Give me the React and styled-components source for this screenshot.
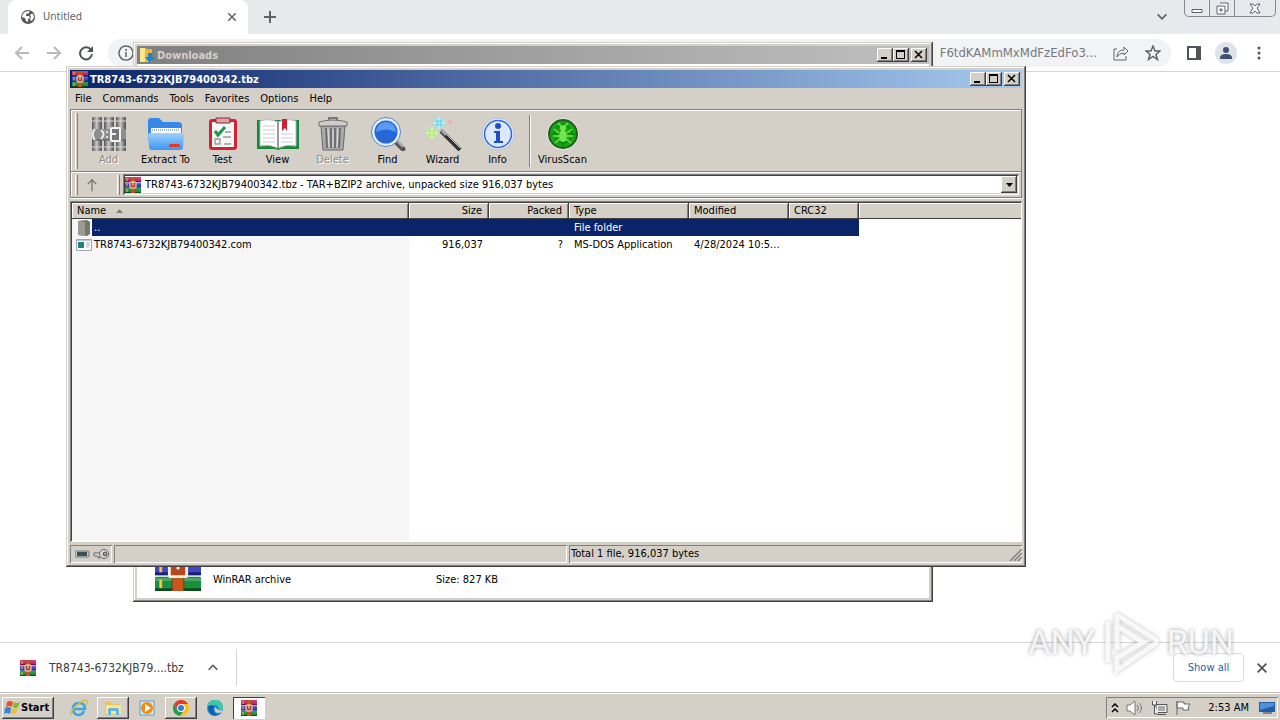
import React from "react";
import styled, { createGlobalStyle, css } from "styled-components";

const ui = `"DejaVu Sans Condensed", "DejaVu Sans", sans-serif`;

const Global = createGlobalStyle`
  *, *::before, *::after { box-sizing: border-box; }
  html, body { margin: 0; padding: 0; }
  body { font-family: ${ui}; font-size: 11px; line-height: 14px; color: #000; background: #fff; }
  button, input, select { font: inherit; color: inherit; margin: 0; padding: 0; border: 0; background: none; }
  svg { display: block; flex: none; }
`;

const raised = css`
  box-shadow: inset -1px -1px #404040, inset 1px 1px #fff, inset -2px -2px #808080;
`;
const sunken = css`
  box-shadow: inset 1px 1px #808080, inset -1px -1px #fff;
`;

const Desktop = styled.div`
  position: relative;
  display: flex;
  flex-direction: column;
  min-height: 100vh;
  overflow: hidden;
`;

/* ---------- browser ---------- */
const TabStrip = styled.header`
  display: flex;
  align-items: stretch;
  height: 34px;
  padding-left: 8px;
  background: #e7eaed;
`;
const Tab = styled.div`
  display: flex;
  align-items: center;
  gap: 8px;
  width: 240px;
  padding: 0 10px 0 13px;
  border-radius: 8px 8px 0 0;
  background: #fff;
  color: #5f6368;
`;
const Grow = styled.span`
  flex: 1;
`;
const PlainButton = styled.button`
  display: grid;
  place-items: center;
  width: ${(p) => p.$w || 16}px;
  height: ${(p) => p.$h || 16}px;
`;
const NewTab = styled(PlainButton)`
  align-self: center;
  margin-left: 12px;
`;
const TabSearch = styled(PlainButton)`
  align-self: center;
  margin-right: 14px;
`;
const Caption = styled.div`
  display: flex;
  height: 17px;
  margin-right: 4px;
  border: 1px solid #85898f;
  border-top: 0;
  border-radius: 0 0 5px 5px;
  button + button { border-left: 1px solid #85898f; }
`;
const NavBar = styled.div`
  display: flex;
  align-items: center;
  gap: 16px;
  height: 38px;
  padding: 0 13px 0 14px;
  border-bottom: 1px solid #d5d7da;
  background: #fff;
`;
const NavActions = styled.div`
  display: flex;
  align-items: center;
  gap: 14px;
`;
const Omnibox = styled.label`
  flex: 1;
  display: flex;
  align-items: center;
  gap: 16px;
  height: 28px;
  margin-left: -2px;
  padding: 0 10px;
  border-radius: 14px;
  background: #f1f3f4;
`;
const Url = styled.input`
  flex: 1;
  min-width: 0;
  font-size: 13px;
  text-align: right;
  color: #75797e;
  outline: 0;
`;
const Avatar = styled.span`
  display: grid;
  place-items: center;
  width: 22px;
  height: 22px;
  border-radius: 50%;
  background: #dfe2e7;
`;
const Page = styled.main`
  flex: 1;
  min-height: 570px;
`;
const Shelf = styled.section`
  display: flex;
  align-items: center;
  height: 50px;
  border-top: 1px solid #d5d7da;
  background: #fff;
`;
const Download = styled.div`
  display: flex;
  align-items: center;
  gap: 13px;
  width: 237px;
  height: 37px;
  padding: 0 15px 0 20px;
  border-right: 1px solid #d5d7da;
  font-size: 12px;
  color: #3c4043;
  white-space: nowrap;
  span { flex: 1; }
`;
const ShowAll = styled.button`
  width: 71px;
  height: 29px;
  margin-right: 10px;
  border: 1px solid #d9dbde;
  border-radius: 4px;
  color: #1a5fc0;
`;
const ShelfClose = styled(PlainButton)`
  margin-right: 10px;
`;

/* ---------- classic windows ---------- */
const Window = styled.section`
  position: absolute;
  top: ${(p) => p.$top}px;
  left: ${(p) => p.$left}px;
  width: ${(p) => p.$width};
  padding: 4px;
  background: #d4d0c8;
  box-shadow: inset -1px -1px #404040, inset 1px 1px #d4d0c8, inset -2px -2px #808080, inset 2px 2px #fff;
`;
const TitleBar = styled.div`
  display: flex;
  align-items: center;
  gap: 2px;
  height: 18px;
  padding: 0 2px;
  font-weight: bold;
  color: ${(p) => (p.$active ? "#fff" : "#d4d0c8")};
  background: ${(p) => (p.$active
    ? "linear-gradient(90deg, #0a246a, #a6caf0)"
    : "linear-gradient(90deg, #808080, #c0c0c0)")};
`;
const TitleText = styled.span`
  flex: 1;
  padding-top: 1px;
`;
const ButtonPair = styled.div`
  display: flex;
`;
const TitleButton = styled.button`
  display: grid;
  place-items: center;
  width: 16px;
  height: 14px;
  background: #d4d0c8;
  ${raised}
`;
const FolderBody = styled.div`
  display: flex;
  align-items: flex-end;
  min-height: 534px;
  padding: 0 18px 7px;
  background: #fff;
`;
const Thumb = styled.span`
  width: 58px;
`;
const Detail = styled.span`
  width: ${(p) => p.$w}px;
  padding-bottom: 4px;
`;
const MenuBar = styled.nav`
  display: flex;
  gap: 11px;
  height: 20px;
  padding: 2px 5px 0;
  align-items: center;
`;
const MenuItem = styled.button`
  height: 18px;
`;
const Rebar = styled.div`
  margin: 1px 0 3px;
  border: 1px solid #808080;
  box-shadow: inset 1px 1px #fff, 0 1px #fff;
`;
const ToolRow = styled.div`
  display: flex;
  align-items: center;
  height: 62px;
  padding: 0 4px;
  border-bottom: 1px solid #808080;
`;
const Grip = styled.span`
  flex: none;
  width: 3px;
  align-self: stretch;
  margin: 3px ${(p) => p.$gap || 0}px 2px 0;
  border-left: 1px solid #fff;
  border-right: 1px solid #808080;
`;
const Tool = styled.button`
  display: flex;
  flex-direction: column;
  align-items: center;
  gap: 2px;
  width: ${(p) => p.$w || 55}px;
  padding-top: 3px;
  color: #000;
  white-space: nowrap;
  &:disabled { color: #8c8a84; text-shadow: 1px 1px #fff; }
`;
const ToolSep = styled.span`
  width: 2px;
  height: 52px;
  margin: 0 4px;
  border-left: 1px solid #808080;
  border-right: 1px solid #fff;
`;
const AddressRow = styled.div`
  display: flex;
  align-items: center;
  height: 25px;
  padding: 0 2px 0 4px;
  box-shadow: inset 0 1px #fff;
`;
const UpButton = styled(PlainButton)`
  margin-right: 17px;
`;
const Address = styled.label`
  flex: 1;
  display: flex;
  align-items: center;
  gap: 4px;
  height: 21px;
  padding: 0 2px;
  background: #fff;
  box-shadow: inset 1px 1px #808080, inset -1px -1px #fff, inset 2px 2px #404040, inset -2px -2px #d4d0c8;
  select { flex: 1; appearance: none; outline: 0; }
`;
const DropMark = styled.span`
  display: grid;
  place-items: center;
  width: 16px;
  height: 17px;
  background: #d4d0c8;
  ${raised}
`;
const List = styled.div`
  min-height: 341px;
  padding: 2px 1px 1px 2px;
  background: linear-gradient(90deg, #f6f6f6 339px, #fff 339px);
  box-shadow: inset 1px 1px #808080, inset -1px -1px #fff, inset 2px 2px #404040;
`;
const Files = styled.table`
  width: 100%;
  table-layout: fixed;
  border-collapse: separate;
  border-spacing: 0;
  th, td { padding: 0 6px 0 5px; font-weight: normal; text-align: left; white-space: nowrap; overflow: hidden; }
  th { height: 16px; line-height: 15px; background: #d4d0c8; border-bottom: 1px solid #404040; border-right: 1px solid #404040; box-shadow: inset 1px 1px #fff, inset -1px 0 #808080; }
  th:last-child { border-right: 0; box-shadow: inset 1px 1px #fff; }
  td { height: 17px; line-height: 17px; }
  th.num, td.num { text-align: right; }
`;
const FileRow = styled.tr`
  color: ${(p) => (p.$selected ? "#fff" : "#000")};
  td { background: ${(p) => (p.$selected ? "#0a246a" : "transparent")}; }
  td:first-child { padding: 0 0 0 4px; background: transparent; }
  td:last-child { background: transparent; }
`;
const NameCell = styled.div`
  display: flex;
  align-items: center;
  height: 17px;
  span { flex: 1; padding-left: 2px; background: ${(p) => (p.$selected ? "#0a246a" : "transparent")}; }
`;
const HeadName = styled.span`
  display: flex;
  align-items: center;
  gap: 10px;
`;
const StatusBar = styled.footer`
  display: flex;
  gap: 2px;
  margin-top: 3px;
`;
const Panel = styled.div`
  display: flex;
  align-items: center;
  justify-content: space-between;
  flex: ${(p) => p.$flex};
  height: 18px;
  padding-left: ${(p) => p.$pad || 2}px;
  ${sunken}
`;

/* ---------- taskbar ---------- */
const Taskbar = styled.footer`
  display: flex;
  align-items: center;
  gap: 2px;
  height: 28px;
  padding: 2px 2px 0;
  border-top: 1px solid #c2c0bb;
  background: #d4d0c8;
  box-shadow: inset 0 1px #fff;
`;
const Start = styled.button`
  display: flex;
  align-items: center;
  gap: 1px;
  width: 52px;
  height: 22px;
  margin-right: 7px;
  padding-left: 2px;
  font-weight: bold;
  ${raised}
`;
const TaskButton = styled.button`
  display: grid;
  place-items: center;
  width: 32px;
  height: 22px;
  ${(p) => p.$state === "open" && raised}
  ${(p) => p.$state === "pressed" && css`background: #fff; box-shadow: inset 1px 1px #404040, inset -1px -1px #fff;`}
`;
const Tray = styled.div`
  display: flex;
  align-items: center;
  gap: 7px;
  height: 21px;
  padding: 0 3px 0 5px;
  ${sunken}
  time { padding: 0 3px 0 9px; }
`;
const Watermark = styled.div`
  position: absolute;
  right: 46px;
  bottom: 46px;
  display: flex;
  align-items: center;
  gap: 4px;
  font: 34px/36px Roboto, "Liberation Sans", sans-serif;
  color: rgba(255, 255, 255, 0.85);
  text-shadow: 0 0 4px rgba(0, 0, 0, 0.4);
  pointer-events: none;
  svg { filter: drop-shadow(0 0 2px rgba(0, 0, 0, 0.3)); }
`;

/* ---------- drawings ---------- */
const Stroke = ({ d, size = 16, color = "#5f6368", w = 2 }) => (
  <svg width={size} height={size} viewBox="0 0 16 16" fill="none" stroke={color} strokeWidth={w}><path d={d} /></svg>
);
const books = [
  { fill: "#c32b62", edge: "#7c123c" },
  { fill: "#4146c8", edge: "#1c1f78" },
  { fill: "#1b8f3c", edge: "#0b4c1c" },
];
const Rar = ({ size = 16 }) => (
  <svg width={size} height={size} viewBox="0 0 32 32">
    {books.map((b, i) => (
      <g key={b.fill} transform={`translate(0 ${i * 11})`}>
        <rect width="32" height="10" rx="1" fill={b.fill} />
        <path d="M0 2h32" stroke="#fff" strokeOpacity=".2" strokeWidth="2" />
        <path d="M0 9h32" stroke={b.edge} strokeWidth="2" />
        <path d="M4 2v6" stroke="#f6c53c" strokeWidth="2" />
      </g>
    ))}
    <rect x="12" y="0" width="8" height="32" fill="#c9561c" />
    <path d="M12 0v32M20 0v32" stroke="#6b2b12" strokeOpacity=".5" />
    <rect x="10" y="10" width="12" height="12" rx="1" fill="#b8481c" stroke="#f1efe8" strokeWidth="2" />
    <path d="M16 10v7" stroke="#f1efe8" strokeWidth="2" />
  </svg>
);
const AddIcon = () => (
  <svg width="34" height="34" viewBox="0 0 34 34">
    <defs><linearGradient id="book"><stop stopColor="#555" /><stop offset=".45" stopColor="#c4c4c4" /><stop offset="1" stopColor="#4b4b4b" /></linearGradient></defs>
    {[0, 12, 24].map((x) => <g key={x}><rect x={x} width="10" height="34" rx="1" fill="url(#book)" /><path d={`M${x} 4h10M${x} 30h10`} stroke="#e4e4e4" strokeOpacity=".6" strokeWidth="1.5" /></g>)}
    <path d="M0 12h34v11H0z" fill="#8d8d8d" /><path d="M0 23h34" stroke="#555" />
    <path d="M3 12a8 8 0 0 0 0 11M9 13q5 4 0 9" fill="none" stroke="#e9e9e9" strokeWidth="2" />
    <circle cx="15" cy="15" r="1" fill="#fff" /><circle cx="15" cy="20" r="1" fill="#fff" />
    <rect x="19" y="11" width="9" height="13" rx="1" fill="#777" stroke="#f3f3f3" strokeWidth="2" /><path d="M18 17h6" stroke="#f3f3f3" strokeWidth="2" />
  </svg>
);
const ExtractIcon = () => (
  <svg width="38" height="34" viewBox="0 0 38 34">
    <defs><linearGradient id="fold" x2="0" y2="1"><stop stopColor="#9fd2ff" /><stop offset="1" stopColor="#3b96f2" /></linearGradient></defs>
    <path d="M1 4q0-3 3-3h8l4 4h15q4 0 4 4v14H1z" fill="#3388ea" />
    <path d="M4 11h30v9H4z" fill="#fff" /><path d="M5 13h28" stroke="#9bbbd9" strokeWidth="2" strokeDasharray="1 1" />
    <path d="M1 18q0-2 2-2h32q2 0 2 2l-1 12q0 3-3 3H5q-3 0-3-3z" fill="url(#fold)" />
    <rect x="22" y="27" width="11" height="3" rx="1" fill="#e5392c" />
  </svg>
);
const TestIcon = () => (
  <svg width="34" height="34" viewBox="0 0 34 34">
    <rect x="3" y="2" width="28" height="31" rx="3" fill="#d42235" />
    <path d="M6 5h22v25H6z" fill="#f6f6f6" /><path d="M10 1h14v5H10z" fill="#dba4a6" stroke="#8f2830" />
    <path d="m9 14 3 4 7-8" fill="none" stroke="#249548" strokeWidth="3" />
    <path d="M19 15h6M17 20h8M18 27h7M9 22h5v5H9z" fill="none" stroke="#999" strokeWidth="1.3" />
  </svg>
);
const ViewIcon = () => (
  <svg width="42" height="34" viewBox="0 0 42 34">
    <path d="M0 3h42v29H24l-3 1-3-1H0z" fill="#15883e" />
    <path d="M3 4q9-3 18 1 9-4 18-1v25q-10-2-18 2-8-4-18-2z" fill="#fff" stroke="#bbb" />
    <path d="M21 5v26" stroke="#999" strokeWidth="2" />
    <path d="M6 9h12M6 13h12M6 17h12M6 21h12M6 25h12M24 17h12M24 21h12M24 25h12" stroke="#ccc" />
    <path d="M25 2h5v12l-2-3-3 3z" fill="#d51d36" />
  </svg>
);
const DeleteIcon = () => (
  <svg width="34" height="34" viewBox="0 0 34 34">
    <path d="M5 9h24l-2 24H7z" fill="#aaa" stroke="#686868" />
    <path d="m10 11 1 20M15 11v20M19 11v20M24 11l-1 20" stroke="#6f6f6f" strokeWidth="2" />
    <path d="m12 12 1 18M17 12v18M22 12l-1 18" stroke="#e5e5e5" />
    <path d="M3 5q14-4 28 0v4H3z" fill="#ccc" stroke="#707070" /><path d="M13 3V1h8v2" fill="none" stroke="#777" strokeWidth="2" />
  </svg>
);
const FindIcon = () => (
  <svg width="36" height="34" viewBox="0 0 36 34">
    <path d="m24 23 9 9" stroke="#555" strokeWidth="5" strokeLinecap="round" /><path d="m25 22 8 8" stroke="#aaa" strokeWidth="2" />
    <circle cx="16" cy="15" r="13" fill="#2566d8" stroke="#e4eefb" strokeWidth="3" /><circle cx="16" cy="15" r="14.500" fill="none" stroke="#5587c8" />
    <path d="M6 15q1-10 10-10t10 10q-10-5-20 0" fill="#77b7ff" opacity=".65" />
  </svg>
);
const WizardIcon = () => (
  <svg width="38" height="34" viewBox="0 0 38 34">
    <circle cx="8" cy="16" r="6" fill="#b9f48c" opacity=".6" /><circle cx="15" cy="6" r="6" fill="#8eeaf5" opacity=".6" />
    <circle cx="8" cy="16" r="3" fill="#9df05c" /><circle cx="15" cy="6" r="3" fill="#4fd6f2" />
    <path d="M8 10v12M2 16h12M15 0v12M9 6h12" stroke="#fff" strokeOpacity=".6" />
    <path d="m26 2 1 2 2 1-2 1-1 2-1-2-2-1 2-1z" fill="#f4a4b2" />
    <path d="m17 14 19 19" stroke="#333" strokeWidth="4" /><path d="m17 13 5 5" stroke="#999" strokeWidth="3" /><path d="m19 14 17 17" stroke="#bbb" />
  </svg>
);
const InfoIcon = () => (
  <svg width="34" height="34" viewBox="0 0 34 34">
    <circle cx="17" cy="17" r="16" fill="#e8effc" stroke="#b1c2df" /><circle cx="17" cy="17" r="13.500" fill="#dce8fb" stroke="#3469db" strokeWidth="1.5" />
    <circle cx="17" cy="9" r="3" fill="#1f4fc5" /><path d="M13 14h6v10h3v2h-9v-2h2v-8h-2z" fill="#1f4fc5" />
  </svg>
);
const VirusIcon = () => (
  <svg width="34" height="34" viewBox="0 0 34 34">
    <circle cx="17" cy="17" r="15" fill="#16a812" stroke="#e4e4e4" strokeWidth="2" /><circle cx="17" cy="17" r="14" fill="none" stroke="#245d20" strokeWidth="2" />
    <circle cx="17" cy="17" r="9" fill="none" stroke="#087b08" /><path d="M17 3v28M3 17h28" stroke="#087b08" />
    <ellipse cx="17" cy="19" rx="4" ry="6" fill="#75e34c" /><circle cx="17" cy="11" r="3" fill="#75e34c" />
    <path d="m13 16-5-4M21 16l5-4M13 19H7M21 19h6M14 22l-5 4M20 22l5 4M15 9l-3-3M19 9l3-3" stroke="#75e34c" strokeWidth="1.5" />
  </svg>
);
const FolderIcon = ({ down }) => (
  <svg width="16" height="16" viewBox="0 0 16 16">
    <path d="M1 1h6l1 1h5v13H1z" fill="#e9b93b" /><path d="M1 1h5v14H1z" fill="#fbe58d" />
    {down && <path d="M9 6h4v4h3l-5 6-5-6h3z" fill="#1c83cf" />}
  </svg>
);
const GrayFolder = () => (
  <svg width="16" height="16" viewBox="0 0 16 16"><path d="m2 1 9-1 3 2v12l-3 2-9-1z" fill="#75766e" /><path d="m2 1 7 1v14l-7-1z" fill="#9a9b91" /></svg>
);
const ComIcon = () => (
  <svg width="16" height="16" viewBox="0 0 16 16"><path d="M.5 2.500h15v11H.5z" fill="#fff" stroke="#9aa7b2" /><path d="M1 3h14v1H1z" fill="#b9cbdc" /><path d="M2 5h6v6H2z" fill="#28817f" /><path d="M10 6h4M10 8h4M10 10h3" stroke="#a5b4c1" /></svg>
);
const Globe = () => (
  <svg width="14" height="14" viewBox="0 0 14 14"><circle cx="7" cy="7" r="7" fill="#565a5f" /><path d="M8 1q1 2-1 2.500L5 4v2h3l1 2-2 1v3l-2-1-1-3-3-1q0-4 4-5.500M9 5q2-2 3-1l1 3q-1 3-3 4l-1-2 1-2z" fill="#fff" /></svg>
);
const Arrow = ({ flip }) => <Stroke color="#b8babd" d={flip ? "M1 8h13M8 2l6 6-6 6" : "M15 8H2M8 2 2 8l6 6"} />;
const CaptionGlyph = {
  min: <path d="M3 7.500h10v3H3z" />,
  max: <path d="M6 1h8v8h-3M3 4h8v8H3zM6 7h2v2H6z" />,
  close: <path d="M3 2h3l2 2 2-2h3L10 6l3 5h-3L8 9l-2 2H3l3-5z" />,
};
const WinFlag = () => (
  <svg width="16" height="16" viewBox="0 0 16 16"><path d="M3 2q3-2 6 0L8 7Q5 5 2 7z" fill="#e65124" /><path d="M10 2q3 2 6 0l-2 5q-3 2-5 0z" fill="#82b92f" /><path d="M1 8q3-2 6 0l-1 6q-3-2-6 0z" fill="#3286d2" /><path d="M8 8q3 2 6 0l-2 5q-3 2-5 0z" fill="#f5bc2b" /></svg>
);
const IeIcon = () => (
  <svg width="18" height="18" viewBox="0 0 18 18" fill="none"><path d="M14 12q-2 4-5 4-6 0-6-6t6-6q6 0 6 6H4" stroke="#36a7e1" strokeWidth="2.500" /><path d="M2 16Q-1 13 7 6t10-4q1 1-1 4" stroke="#e6b83b" strokeWidth="1.500" /></svg>
);
const ExplorerIcon = () => (
  <svg width="18" height="18" viewBox="0 0 18 18"><path d="M1 3h6l1 2h8v11H1z" fill="#e9c55b" /><path d="M2 6h15v9H2z" fill="#f9e69c" /><path d="M4 16v-5q0-2 2-2h7q2 0 2 2v5h-3v-4H7v4z" fill="#63b5e5" /></svg>
);
const MediaIcon = () => (
  <svg width="16" height="16" viewBox="0 0 16 16"><path d="M1 1h14v14H1z" fill="#d5eaf7" stroke="#5aa0cc" /><circle cx="8" cy="8" r="6" fill="#f28a13" /><path d="m6 4 6 4-6 4z" fill="#fff" /></svg>
);
const ChromeIcon = () => (
  <svg width="16" height="16" viewBox="0 0 16 16"><circle cx="8" cy="8" r="8" fill="#fbc116" /><path d="M1 4a8 8 0 0 1 14 0H8L5 10z" fill="#e33b2e" /><path d="M1 4a8 8 0 0 0 6 12l4-6H5z" fill="#229b4c" /><circle cx="8" cy="8" r="4" fill="#fff" /><circle cx="8" cy="8" r="3" fill="#3478e5" /></svg>
);
const EdgeIcon = () => (
  <svg width="16" height="16" viewBox="0 0 16 16"><circle cx="8" cy="8" r="8" fill="#1686d4" /><path d="M0 8a8 8 0 0 1 16-1q0 4-5 4 2-6-4-6-4 0-7 3" fill="#3fc8a7" /><path d="M8 7q-2 5 3 6 2 0 4-1v-2q-2 1-4 0-1-1-3-3" fill="#d4d0c8" /><path d="M1 6q5-2 6 1-2 6 3 8-8 2-9-9" fill="#0d5eb3" /></svg>
);
const TitleGlyph = ({ kind }) => (
  <svg width="10" height="10" viewBox="0 0 10 10" fill="none" stroke="#000" shapeRendering="crispEdges">
    {kind === "min" && <path d="M1 8h6" strokeWidth="2" />}
    {kind === "max" && <path d="M0 .5h9M0 1.500h9M.5 0v8.500h8V0" />}
    {kind === "close" && <path d="m1 1 7 7M8 1 1 8" strokeWidth="1.500" shapeRendering="auto" />}
  </svg>
);

const TitleControls = () => (
  <>
    <ButtonPair>
      <TitleButton aria-label="Minimize"><TitleGlyph kind="min" /></TitleButton>
      <TitleButton aria-label="Maximize"><TitleGlyph kind="max" /></TitleButton>
    </ButtonPair>
    <TitleButton aria-label="Close"><TitleGlyph kind="close" /></TitleButton>
  </>
);

const tools = [
  ["Add", AddIcon, 55, true],
  ["Extract To", ExtractIcon, 59],
  ["Test", TestIcon],
  ["View", ViewIcon],
  ["Delete", DeleteIcon, 55, true],
  ["Find", FindIcon],
  ["Wizard", WizardIcon],
  ["Info", InfoIcon],
  ["VirusScan", VirusIcon],
];
const files = [
  { name: "..", size: "", packed: "", type: "File folder", date: "", Icon: GrayFolder, selected: true },
  { name: "TR8743-6732KJB79400342.com", size: "916,037", packed: "?", type: "MS-DOS Application", date: "4/28/2024 10:5...", Icon: ComIcon },
];

export default function App() {
  return (
    <Desktop>
      <Global />
      <TabStrip>
        <Tab>
          <Globe />
          <span>Untitled</span>
          <Grow />
          <PlainButton $w={12} aria-label="Close tab"><Stroke size={12} d="M3 3l10 10M13 3 3 13" /></PlainButton>
        </Tab>
        <NewTab $w={20} aria-label="New tab"><Stroke d="M8 2v12M2 8h12" /></NewTab>
        <Grow />
        <TabSearch aria-label="Search tabs"><Stroke size={14} d="m3 5 5 5 5-5" /></TabSearch>
        <Caption>
          {[["min", 24], ["max", 25], ["close", 41]].map(([k, w]) => (
            <PlainButton key={k} $w={w} aria-label={k}>
              <svg width="16" height="13" viewBox="0 0 16 13" fill="#fff" stroke="#5c626c">{CaptionGlyph[k]}</svg>
            </PlainButton>
          ))}
        </Caption>
      </TabStrip>
      <NavBar>
        <PlainButton aria-label="Back"><Arrow /></PlainButton>
        <PlainButton aria-label="Forward"><Arrow flip /></PlainButton>
        <PlainButton aria-label="Reload">
          <svg width="16" height="16" viewBox="0 0 16 16"><path d="M13 5a6 6 0 1 0 1 4" fill="none" stroke="#4f5358" strokeWidth="2" /><path d="M15 1v6H9z" fill="#4f5358" /></svg>
        </PlainButton>
        <Omnibox>
          <Stroke w={1.5} d="M8 1a7 7 0 1 0 .1 0M8 7v5M8 4v2" />
          <Url aria-label="Address" readOnly value="F6tdKAMmMxMdFzEdFo3..." />
          <Stroke w={1} d="M4 4H1v11h12v-4M4 12q0-7 7-7V2l4 4-4 4V8q-5 0-7 4z" />
          <Stroke w={1.5} d="m8 1 2 5h5l-4 3.500 1.500 5L8 11.500l-4.500 3 1.500-5L1 6h5z" />
        </Omnibox>
        <NavActions>
          <PlainButton $w={14} aria-label="Side panel">
            <svg width="14" height="14" viewBox="0 0 14 14"><path d="M1 1h12v12H1z" fill="#fff" stroke="#505459" strokeWidth="2" /><path d="M9 1h4v12H9z" fill="#505459" /></svg>
          </PlainButton>
          <Avatar><svg width="14" height="14" viewBox="0 0 14 14" fill="#434e70"><circle cx="7" cy="4" r="3" /><path d="M1 12q0-4 6-4t6 4v1H1z" /></svg></Avatar>
          <PlainButton aria-label="Menu"><svg width="4" height="16" viewBox="0 0 4 16" fill="#505459"><circle cx="2" cy="3" r="1.500" /><circle cx="2" cy="8" r="1.500" /><circle cx="2" cy="13" r="1.500" /></svg></PlainButton>
        </NavActions>
      </NavBar>
      <Page />
      <Shelf>
        <Download>
          <Rar />
          <span>TR8743-6732KJB79....tbz</span>
          <PlainButton aria-label="Download options"><Stroke size={14} d="m3 10 5-5 5 5" /></PlainButton>
        </Download>
        <Grow />
        <ShowAll>Show all</ShowAll>
        <ShelfClose aria-label="Close downloads"><Stroke size={14} color="#4f5358" d="M3 3l10 10M13 3 3 13" /></ShelfClose>
      </Shelf>

      <Taskbar>
        <Start><WinFlag />Start</Start>
        <TaskButton aria-label="Internet Explorer"><IeIcon /></TaskButton>
        <TaskButton $state="open" aria-label="Explorer"><ExplorerIcon /></TaskButton>
        <TaskButton aria-label="Media Player"><MediaIcon /></TaskButton>
        <TaskButton $state="open" aria-label="Chrome"><ChromeIcon /></TaskButton>
        <TaskButton aria-label="Edge"><EdgeIcon /></TaskButton>
        <TaskButton $state="pressed" aria-label="WinRAR"><Rar /></TaskButton>
        <Grow />
        <Tray>
          <svg width="8" height="10" viewBox="0 0 8 10" fill="none" stroke="#000" strokeWidth="1.500"><path d="m1 4 3-3 3 3M1 9l3-3 3 3" /></svg>
          <svg width="18" height="16" viewBox="0 0 18 16" fill="#fff" stroke="#777"><path d="M1 5h3l5-4v14l-5-4H1z" /><path d="M11 5q3 3 0 6M13 3q5 5 0 10" fill="none" /></svg>
          <svg width="17" height="16" viewBox="0 0 17 16" fill="#eee" stroke="#555"><path d="M5 4.500h11v8H5zM7 14.500h8" /><path d="M7 6h7v5H7z" fill="#aaa" stroke="none" /><path d="M1.500 1v4h4V1M3.500 5v9h4" /></svg>
          <svg width="17" height="16" viewBox="0 0 17 16" fill="#fff" stroke="#666"><path d="M2 1v14M2 2h7v2h6l-2 3 1 3H8V8H2z" /></svg>
          <time>2:53 AM</time>
          <svg width="16" height="14" viewBox="0 0 16 14"><path d="M0 1h16v10H0z" fill="#205daa" /><path d="M1 2h14v3L1 9z" fill="#4f91d9" /><path d="M4 12h9" stroke="#335" /></svg>
        </Tray>
      </Taskbar>

      <Window $top={42} $left={133} $width="62.5%">
        <TitleBar>
          <FolderIcon down />
          <TitleText>Downloads</TitleText>
          <TitleControls />
        </TitleBar>
        <FolderBody>
          <Thumb><Rar size={46} /></Thumb>
          <Detail $w={223}>WinRAR archive</Detail>
          <Detail $w={100}>Size: 827 KB</Detail>
        </FolderBody>
      </Window>

      <Window $top={66} $left={66} $width="75%">
        <TitleBar $active>
          <Rar />
          <TitleText>TR8743-6732KJB79400342.tbz</TitleText>
          <TitleControls />
        </TitleBar>
        <MenuBar>
          {["File", "Commands", "Tools", "Favorites", "Options", "Help"].map((m) => <MenuItem key={m}>{m}</MenuItem>)}
        </MenuBar>
        <Rebar>
          <ToolRow>
            <Grip $gap={3} />
            {tools.map(([label, Icon, w, off]) => (
              <React.Fragment key={label}>
                {label === "VirusScan" && <ToolSep />}
                <Tool $w={w} disabled={off}><Icon />{label}</Tool>
              </React.Fragment>
            ))}
          </ToolRow>
          <AddressRow>
            <Grip $gap={6} />
            <UpButton aria-label="Up"><Stroke size={14} w={1.5} color="#777" d="M8 15V2M3 7l5-5 5 5" /></UpButton>
            <Grip $gap={3} />
            <Address>
              <Rar />
              <select aria-label="Archive path">
                <option>TR8743-6732KJB79400342.tbz - TAR+BZIP2 archive, unpacked size 916,037 bytes</option>
              </select>
              <DropMark><svg width="7" height="4" viewBox="0 0 7 4"><path d="M0 0h7L3.500 4z" /></svg></DropMark>
            </Address>
          </AddressRow>
        </Rebar>
        <List>
          <Files>
            <colgroup>
              {[337, 80, 80, 120, 100, 70].map((w, i) => <col key={i} style={{ width: w }} />)}
              <col />
            </colgroup>
            <thead>
              <tr>
                <th><HeadName>Name<svg width="7" height="4" viewBox="0 0 7 4"><path d="M0 4h7L3.500 0z" fill="#808080" /></svg></HeadName></th>
                <th className="num">Size</th>
                <th className="num">Packed</th>
                <th>Type</th>
                <th>Modified</th>
                <th>CRC32</th>
                <th aria-label="Unused" />
              </tr>
            </thead>
            <tbody>
              {files.map(({ Icon, ...f }) => (
                <FileRow key={f.name} $selected={f.selected}>
                  <td><NameCell $selected={f.selected}><Icon /><span>{f.name}</span></NameCell></td>
                  <td className="num">{f.size}</td>
                  <td className="num">{f.packed}</td>
                  <td>{f.type}</td>
                  <td>{f.date}</td>
                  <td />
                  <td />
                </FileRow>
              ))}
            </tbody>
          </Files>
        </List>
        <StatusBar>
          <Panel $flex="0 0 42px" $pad={5}>
            <svg width="36" height="12" viewBox="0 0 36 12"><rect x="0" y="3" width="14" height="6" rx="1" fill="#b9c8cc" stroke="#777" /><path d="M2 4h10v4H2z" fill="#3c5058" /><path d="M19 5h9v3h-3v2h-2V8h-4z" fill="#ddd" stroke="#666" /><circle cx="29" cy="6" r="4.500" fill="#ddd" stroke="#666" /><circle cx="30" cy="6" r="2" fill="#999" stroke="#555" /></svg>
          </Panel>
          <Panel $flex="1 1 0" />
          <Panel $flex="1 1 0">
            Total 1 file, 916,037 bytes
            <svg width="13" height="13" viewBox="0 0 13 13" stroke="#808080" strokeWidth="1.500"><path d="M1 13 13 1M5 13l8-8M9 13l4-4" /></svg>
          </Panel>
        </StatusBar>
      </Window>

      <Watermark>
        ANY
        <svg width="64" height="64" viewBox="0 0 64 64" fill="none" stroke="#fff" strokeOpacity=".85" strokeWidth="5"><path d="M18 4v36M18 5l38 24q3 2 0 5L18 60V48l26-16-26-16M9 12v40" /></svg>
        RUN
      </Watermark>
    </Desktop>
  );
}
